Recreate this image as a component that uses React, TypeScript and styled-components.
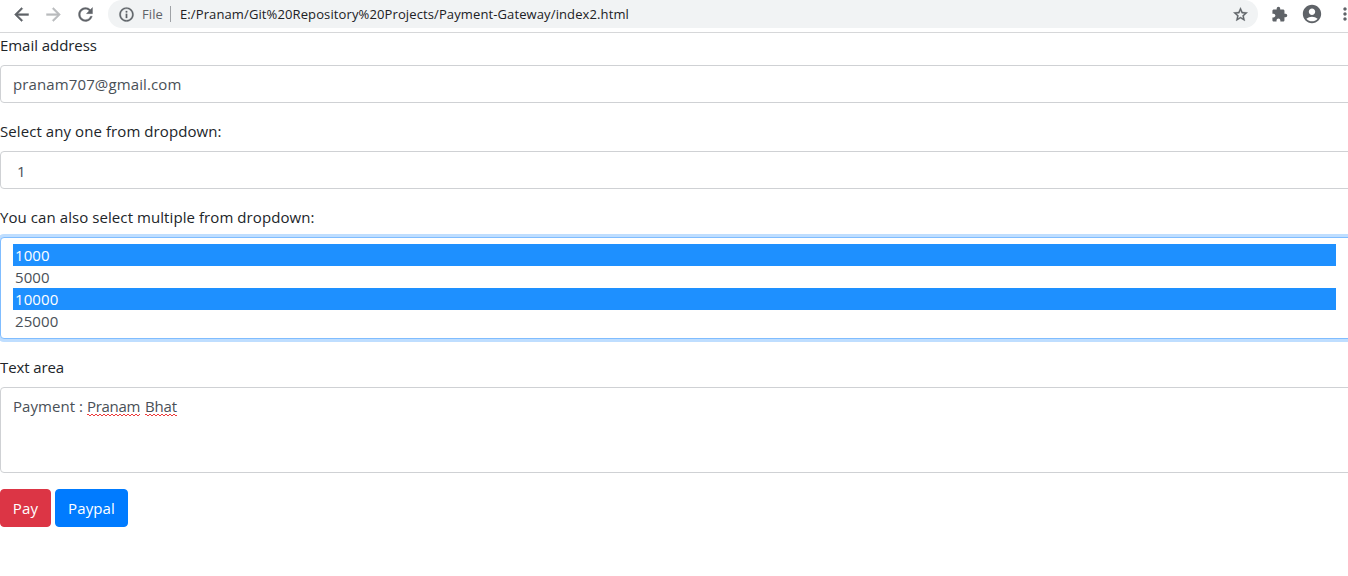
import React from 'react';
import styled, { createGlobalStyle, css } from 'styled-components';
import {
  MdAccountCircle,
  MdArrowBack,
  MdArrowForward,
  MdExtension,
  MdInfoOutline,
  MdMoreVert,
  MdRefresh,
  MdStarBorder,
} from 'react-icons/md';

const GlobalStyle = createGlobalStyle`
  *, *::before, *::after { box-sizing: border-box; }
  body {
    margin: 0;
    overflow: hidden;
    background: #fff;
    color: #212529;
    font-family: "Open Sans", "Noto Sans", sans-serif;
    font-size: 15px;
    line-height: 24px;
  }
`;

const Toolbar = styled.header`
  display: flex;
  align-items: flex-start;
  height: 33px;
  border-bottom: 1px solid #d6d7d9;
  overflow: hidden;
`;

const ToolButton = styled.span<{ $width: number; $muted?: boolean; $bold?: number }>`
  display: flex;
  flex: none;
  align-items: center;
  justify-content: center;
  width: ${(p) => p.$width}px;
  height: 28px;
  color: ${(p) => (p.$muted ? '#babcbe' : '#5f6368')};

  svg {
    stroke-width: ${(p) => p.$bold ?? 0};
  }

  path[fill='none'] {
    stroke: none;
  }
`;

const NavButtons = styled.div`
  display: flex;
  flex: none;
  padding-left: 5.5px;
  width: 108px;
`;

const AddressBar = styled.div`
  display: flex;
  flex: none;
  align-items: center;
  width: 1150px;
  height: 28px;
  padding: 0 9.5px 0 9px;
  border-radius: 14px;
  background: #f1f3f4;
  color: #202124;
  font-size: 13px;
  line-height: 28px;
  white-space: nowrap;
`;

const Scheme = styled.span`
  margin-left: 7px;
  padding-right: 7px;
  color: #5f6368;
  letter-spacing: 0.1px;
`;

const Divider = styled.span`
  width: 1px;
  height: 16px;
  margin-right: 9px;
  background: #9fa2a6;
`;

const Url = styled.span`
  flex: 1;
  letter-spacing: 0.115px;
`;

const Extensions = styled.div`
  display: flex;
  flex: none;
  padding-left: 5.5px;
`;

const Form = styled.form`
  width: 1356px;
`;

const Group = styled.div`
  display: flex;
  flex-direction: column;
  margin-bottom: 16px;
`;

const Label = styled.label<{ $track: number }>`
  margin-bottom: 8px;
  letter-spacing: ${(p) => p.$track}px;
`;

const field = css`
  padding: 6px 19px 6px 12px;
  border: 1px solid #cfd1d4;
  border-radius: 4px;
  background: #fff;
  color: #495057;
  font: inherit;
`;

const Input = styled.input`
  ${field}
  height: 38px;
  letter-spacing: 0.12px;
  outline: none;
`;

const Select = styled.div`
  ${field}
  height: 38px;
  padding: 7px 16px;
`;

const ListBox = styled.div`
  ${field}
  height: 102px;
  border-color: #80bdff;
  box-shadow: 0 0 0 3px #bfdeff;
`;

const Option = styled.div<{ $selected?: boolean }>`
  height: 22px;
  padding: 0 2px;
  background: ${(p) => (p.$selected ? '#1e90ff' : 'transparent')};
  color: ${(p) => (p.$selected ? '#fff' : '#495057')};
  line-height: 22px;
  letter-spacing: 0.1px;
`;

const TextArea = styled.div`
  ${field}
  display: flex;
  height: 86px;
  white-space: pre;
  letter-spacing: 0.05px;
`;

const Misspelled = styled.span<{ $track: number }>`
  height: 24px;
  margin-right: 5px;
  letter-spacing: ${(p) => p.$track}px;
  background-image:
    linear-gradient(90deg, #ec3b3b 50%, transparent 50%),
    linear-gradient(90deg, transparent 50%, #ec3b3b 50%);
  background-size: 4px 1px, 4px 1px;
  background-position: 0 20px, 0 21px;
  background-repeat: repeat-x;
`;

const Actions = styled.div`
  display: flex;
  gap: 4px;
`;

const Button = styled.button<{ $color: string; $width: number }>`
  width: ${(p) => p.$width}px;
  height: 38px;
  padding: 6px 0;
  border: 1px solid ${(p) => p.$color};
  border-radius: 4px;
  background: ${(p) => p.$color};
  color: #fff;
  font: inherit;
  letter-spacing: 0.13px;
`;

const options = [
  { value: '1000', selected: true },
  { value: '5000', selected: false },
  { value: '10000', selected: true },
  { value: '25000', selected: false },
];

export default function App() {
  return (
    <>
      <GlobalStyle />
      <Toolbar>
        <NavButtons>
          <ToolButton $width={32} $bold={0.5}><MdArrowBack size={21} /></ToolButton>
          <ToolButton $width={32} $muted $bold={0.5}><MdArrowForward size={21} /></ToolButton>
          <ToolButton $width={32} $bold={0.4}><MdRefresh size={21} /></ToolButton>
        </NavButtons>
        <AddressBar>
          <ToolButton $width={18} $bold={0.4}><MdInfoOutline size={17} /></ToolButton>
          <Scheme>File</Scheme>
          <Divider />
          <Url>E:/Pranam/Git%20Repository%20Projects/Payment-Gateway/index2.html</Url>
          <ToolButton $width={17} $bold={0.5}><MdStarBorder size={17} /></ToolButton>
        </AddressBar>
        <Extensions>
          <ToolButton $width={32}><MdExtension size={17} /></ToolButton>
          <ToolButton $width={32}><MdAccountCircle size={22} /></ToolButton>
          <ToolButton $width={34}><MdMoreVert size={20} /></ToolButton>
        </Extensions>
      </Toolbar>
      <Form>
        <Group>
          <Label $track={-0.05}>Email address</Label>
          <Input type="text" defaultValue="pranam707@gmail.com" />
        </Group>
        <Group>
          <Label $track={0.08}>Select any one from dropdown:</Label>
          <Select>1</Select>
        </Group>
        <Group>
          <Label $track={0.075}>You can also select multiple from dropdown:</Label>
          <ListBox>
            {options.map((o) => (
              <Option key={o.value} $selected={o.selected}>{o.value}</Option>
            ))}
          </ListBox>
        </Group>
        <Group>
          <Label $track={-0.1}>Text area</Label>
          <TextArea>
            <span>{'Payment : '}</span>
            <Misspelled $track={-0.3}>Pranam</Misspelled>
            <Misspelled $track={-0.2}>Bhat</Misspelled>
          </TextArea>
        </Group>
        <Actions>
          <Button type="button" $color="#dc3545" $width={51}>Pay</Button>
          <Button type="button" $color="#007bff" $width={73}>Paypal</Button>
        </Actions>
      </Form>
    </>
  );
}
